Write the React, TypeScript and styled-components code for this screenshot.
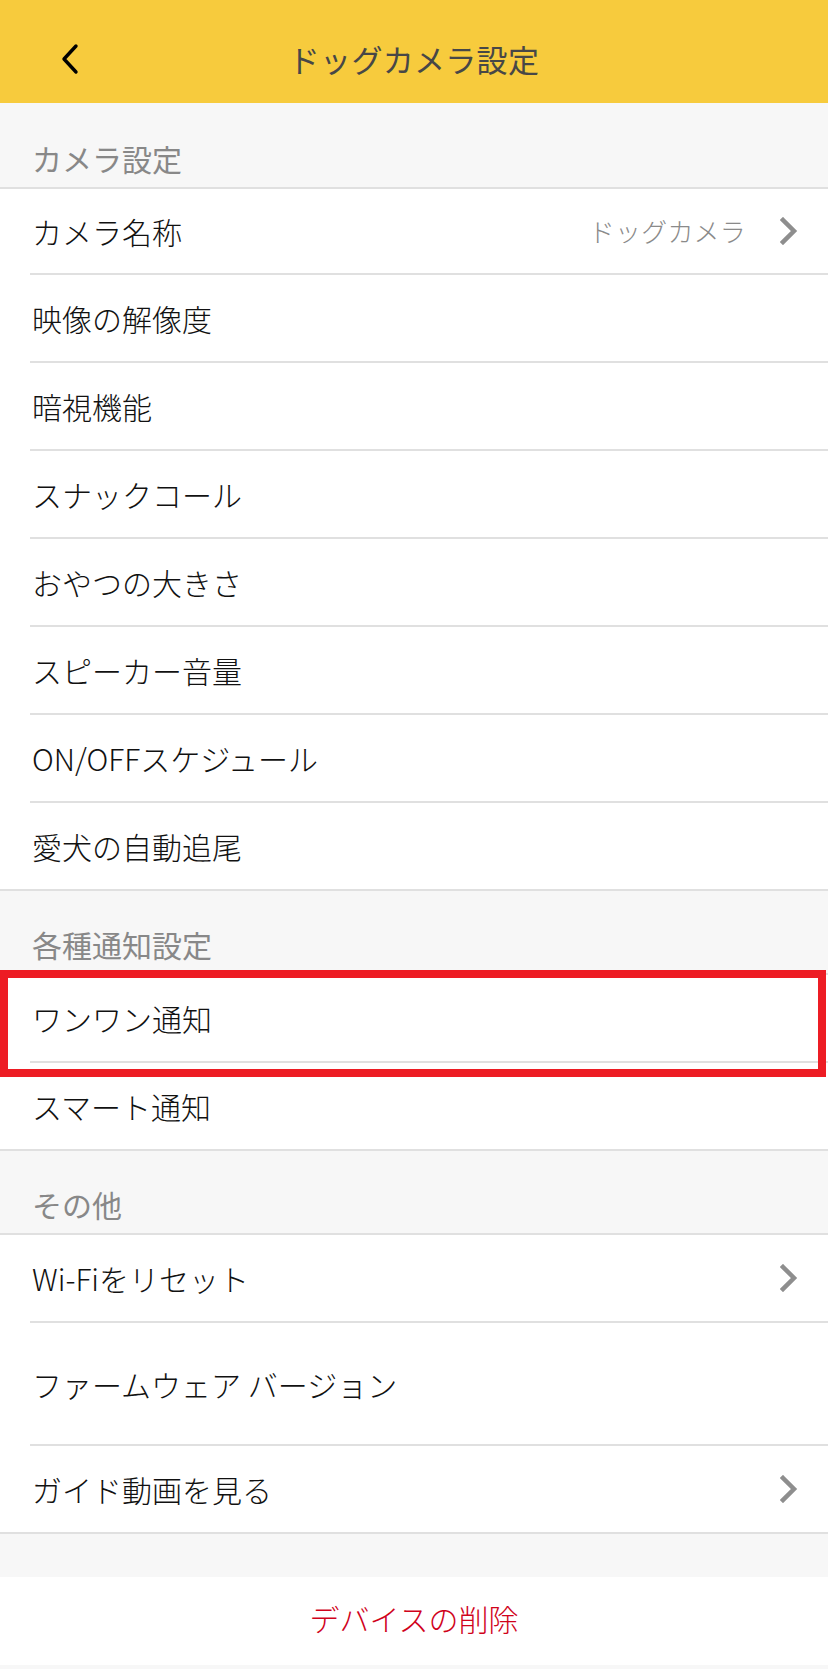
import React from "react";
import styled, { createGlobalStyle } from "styled-components";

const GlobalStyle = createGlobalStyle`
  html, body {
    margin: 0;
    padding: 0;
    background: #f7f7f7;
  }
  body {
    font-family: "Noto Sans CJK JP", "Noto Sans", sans-serif;
    -webkit-font-smoothing: antialiased;
  }
  * { box-sizing: border-box; }
`;

const Page = styled.div`
  width: 828px;
  min-height: 1669px;
  background: #f7f7f7;
  display: flex;
  flex-direction: column;
`;

const Header = styled.header`
  height: 103px;
  padding-top: 15px;
  background: #f7cb3d;
  display: grid;
  grid-template-columns: 1fr auto 1fr;
  align-items: center;
`;

const BackButton = styled.button`
  justify-self: start;
  margin-left: 56px;
  width: 28px;
  height: 40px;
  padding: 0;
  border: none;
  background: transparent;
  display: flex;
  align-items: center;
  justify-content: center;
`;

const Title = styled.h1`
  margin: 0;
  font-size: 31px;
  font-weight: 400;
  color: #474747;
  line-height: 40px;
  letter-spacing: 0.3px;
`;

const SectionTitle = styled.div<{ $first?: boolean }>`
  height: ${(p) => (p.$first ? "86px" : "84px")};
  padding: 0 32px 9px;
  display: flex;
  align-items: flex-end;
  font-size: 30px;
  font-weight: 400;
  line-height: 40px;
  color: #888888;
  border-bottom: 2px solid #e0e0e0;
`;

const List = styled.div`
  background: #ffffff;
  border-bottom: 2px solid #e0e0e0;
`;

const Row = styled.div<{ $tall?: boolean; $short?: boolean }>`
  position: relative;
  height: ${(p) => (p.$tall ? "123px" : p.$short ? "86px" : "88px")};
  margin-left: 30px;
  padding: 0 30px 0 2px;
  display: flex;
  align-items: center;
  border-bottom: 2px solid #e0e0e0;
  &:last-child {
    border-bottom: none;
    height: ${(p) => (p.$tall ? "121px" : "86px")};
  }
`;

const Label = styled.span`
  flex: 1;
  font-size: 30px;
  font-weight: 300;
  line-height: 40px;
  color: #111111;
`;

const Value = styled.span`
  font-size: 26px;
  font-weight: 300;
  line-height: 36px;
  color: #8a8a8a;
  margin-right: 34px;
  letter-spacing: 0.2px;
`;

const Chevron = styled.svg`
  width: 18px;
  height: 28px;
  flex-shrink: 0;
`;

const Highlight = styled.div`
  position: absolute;
  top: -5px;
  left: -30px;
  right: 2px;
  bottom: -16px;
  border: 8px solid #ed1c24;
  pointer-events: none;
  z-index: 1;
`;

const Gap = styled.div`
  height: 43px;
`;

const DeleteButton = styled.button`
  height: 88px;
  border: none;
  background: #ffffff;
  font-family: inherit;
  font-size: 30px;
  font-weight: 300;
  line-height: 40px;
  color: #d0021b;
  display: flex;
  align-items: center;
  justify-content: center;
  padding: 0 0 6px;
`;

const RightChevron = () => (
  <Chevron viewBox="0 0 18 28">
    <path
      d="M3 3 L14 14 L3 25"
      fill="none"
      stroke="#8e8e8e"
      strokeWidth="4.5"
      strokeLinecap="square"
      strokeLinejoin="miter"
    />
  </Chevron>
);

type Item = { label: string; value?: string; arrow?: boolean; tall?: boolean; highlight?: boolean };

const sections: { title: string; items: Item[] }[] = [
  {
    title: "カメラ設定",
    items: [
      { label: "カメラ名称", value: "ドッグカメラ", arrow: true },
      { label: "映像の解像度" },
      { label: "暗視機能" },
      { label: "スナックコール" },
      { label: "おやつの大きさ" },
      { label: "スピーカー音量" },
      { label: "ON/OFFスケジュール" },
      { label: "愛犬の自動追尾" },
    ],
  },
  {
    title: "各種通知設定",
    items: [{ label: "ワンワン通知", highlight: true }, { label: "スマート通知" }],
  },
  {
    title: "その他",
    items: [
      { label: "Wi-Fiをリセット", arrow: true },
      { label: "ファームウェア バージョン", tall: true },
      { label: "ガイド動画を見る", arrow: true },
    ],
  },
];

export default function App() {
  return (
    <Page>
      <GlobalStyle />
      <Header>
        <BackButton aria-label="戻る">
          <svg width="20" height="32" viewBox="0 0 20 32">
            <path
              d="M16 3 L4 16 L16 29"
              fill="none"
              stroke="#000"
              strokeWidth="3.4"
              strokeLinecap="round"
              strokeLinejoin="round"
            />
          </svg>
        </BackButton>
        <Title>ドッグカメラ設定</Title>
        <div />
      </Header>
      {sections.map((s, si) => (
        <section key={s.title}>
          <SectionTitle $first={si === 0}>{s.title}</SectionTitle>
          <List>
            {s.items.map((it, ii) => (
              <Row key={it.label} $tall={it.tall} $short={si === 0 && ii === 0}>
                <Label>{it.label}</Label>
                {it.value && <Value>{it.value}</Value>}
                {it.arrow && <RightChevron />}
                {it.highlight && <Highlight />}
              </Row>
            ))}
          </List>
        </section>
      ))}
      <Gap />
      <DeleteButton>デバイスの削除</DeleteButton>
    </Page>
  );
}
